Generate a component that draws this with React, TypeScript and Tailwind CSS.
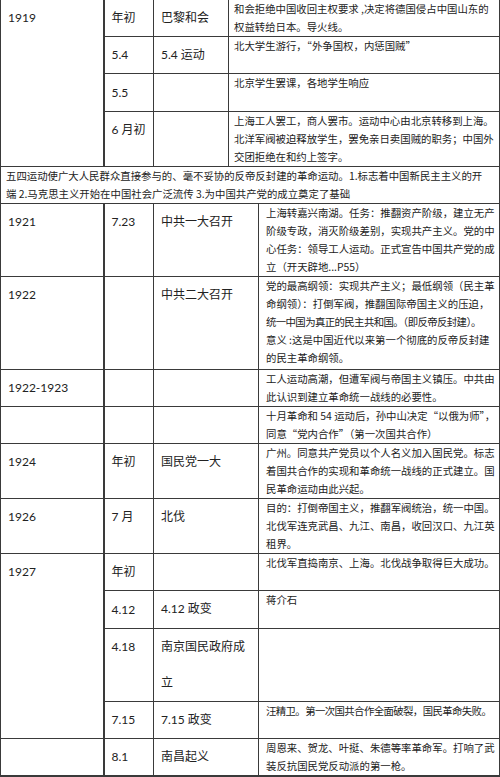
const left = "border border-[#3a3a3a] px-[7px] py-0 align-top text-[12px] leading-[36px] text-[#222] whitespace-nowrap";
const right = "border border-[#3a3a3a] pl-[7px] pr-[3px] py-0 align-top text-[10.4px] leading-[18px] text-[#222] whitespace-nowrap font-['Noto_Sans_CJK_SC',sans-serif]";

function Lines({ lines }: { lines: string[] }) {
  return (
    <>
      {lines.map((l, i) => (
        <div key={i}>{l}</div>
      ))}
    </>
  );
}

function T({ children }: { children?: React.ReactNode }) {
  return <span className="leading-none">{children}</span>;
}

export default function App() {
  return (
    <div className="w-[500px] min-h-[777px] bg-white font-['Noto_Sans_CJK_SC',sans-serif]">
      <table className="w-[499px] table-fixed border-collapse border-b-2 border-b-[#3a3a3a]">
        <colgroup>
          <col className="w-[103px]" />
          <col className="w-[50px]" />
          <col className="w-[75px]" />
          <col className="w-[30px]" />
          <col className="w-[241px]" />
        </colgroup>
        <tbody className="font-['Lato','Noto_Sans_CJK_SC',sans-serif]">
          {/* 1919 */}
          <tr>
            <td rowSpan={4} className={`${left} border-t-0 border-r-2`}><T>1919</T></td>
            <td className={`${left} border-t-0`}><T>年初</T></td>
            <td className={`${left} border-t-0`}><T>巴黎和会</T></td>
            <td colSpan={2} className={`${right} border-t-0 !pl-[5px]`}>
              <Lines lines={["和会拒绝中国收回主权要求 ,决定将德国侵占中国山东的", "权益转给日本。导火线。"]} />
            </td>
          </tr>
          <tr>
            <td className={left}><T>5.4</T></td>
            <td className={left}><T>5.4 运动</T></td>
            <td colSpan={2} className={`${right} !pl-[5px]`}>
              北大学生游行，“外争国权，内惩国贼”
            </td>
          </tr>
          <tr>
            <td className={`${left} leading-[37px]`}><T>5.5</T></td>
            <td className={left}></td>
            <td colSpan={2} className={`${right} !pl-[5px]`}>
              北京学生罢课，各地学生响应
            </td>
          </tr>
          <tr>
            <td className={left}><T>6 月初</T></td>
            <td className={left}></td>
            <td colSpan={2} className={`${right} !pl-[5px]`}>
              <Lines
                lines={[
                  "上海工人罢工，商人罢市。运动中心由北京转移到上海。",
                  "北洋军阀被迫释放学生，罢免亲日卖国贼的职务；中国外",
                  "交团拒绝在和约上签字。",
                ]}
              />
            </td>
          </tr>
          <tr>
            <td colSpan={5} className={`${right} !pl-[5px]`}>
              <Lines
                lines={[
                  "五四运动使广大人民群众直接参与的、毫不妥协的反帝反封建的革命运动。1.标志着中国新民主主义的开",
                  "端 2.马克思主义开始在中国社会广泛流传 3.为中国共产党的成立奠定了基础",
                ]}
              />
            </td>
          </tr>

          {/* 1921 */}
          <tr>
            <td className={`${left} border-r-2`}><T>1921</T></td>
            <td className={left}><T>7.23</T></td>
            <td colSpan={2} className={left}><T>中共一大召开</T></td>
            <td className={right}>
              <Lines
                lines={[
                  "上海转嘉兴南湖。任务：推翻资产阶级，建立无产",
                  "阶级专政，消灭阶级差别，实现共产主义。党的中",
                  "心任务：领导工人运动。正式宣告中国共产党的成",
                  "立（开天辟地...P55）",
                ]}
              />
            </td>
          </tr>
          <tr>
            <td className={`${left} border-r-2`}><T>1922</T></td>
            <td className={left}></td>
            <td colSpan={2} className={left}><T>中共二大召开</T></td>
            <td className={`${right} pb-[2px]`}>
              <div>党的最高纲领：实现共产主义；最低纲领（民主革</div>
              <div>命纲领）：打倒军阀，推翻国际帝国主义的压迫，</div>
              <div className="tracking-[-0.6px]">统一中国为真正的民主共和国。（即反帝反封建）。</div>
              <div>意义 :这是中国近代以来第一个彻底的反帝反封建</div>
              <div>的民主革命纲领。</div>
            </td>
          </tr>
          <tr>
            <td className={`${left} border-r-2`}><T>1922-1923</T></td>
            <td className={left}></td>
            <td colSpan={2} className={left}></td>
            <td className={right}>
              <Lines lines={["工人运动高潮，但遭军阀与帝国主义镇压。中共由", "此认识到建立革命统一战线的必要性。"]} />
            </td>
          </tr>
          <tr>
            <td className={`${left} border-r-2`}></td>
            <td className={left}></td>
            <td colSpan={2} className={left}></td>
            <td className={right}>
              <Lines lines={["十月革命和 54 运动后，孙中山决定“以俄为师”，", "同意“党内合作”（第一次国共合作）"]} />
            </td>
          </tr>
          <tr>
            <td className={`${left} border-r-2`}><T>1924</T></td>
            <td className={left}><T>年初</T></td>
            <td colSpan={2} className={left}><T>国民党一大</T></td>
            <td className={right}>
              <Lines
                lines={[
                  "广州。同意共产党员以个人名义加入国民党。标志",
                  "着国共合作的实现和革命统一战线的正式建立。国",
                  "民革命运动由此兴起。",
                ]}
              />
            </td>
          </tr>
          <tr>
            <td className={`${left} border-r-2`}><T>1926</T></td>
            <td className={left}><T>7 月</T></td>
            <td colSpan={2} className={left}><T>北伐</T></td>
            <td className={right}>
              <Lines
                lines={[
                  "目的：打倒帝国主义，推翻军阀统治，统一中国。",
                  "北伐军连克武昌、九江、南昌，收回汉口、九江英",
                  "租界。",
                ]}
              />
            </td>
          </tr>

          {/* 1927 */}
          <tr>
            <td rowSpan={4} className={`${left} border-r-2`}><T>1927</T></td>
            <td className={left}><T>年初</T></td>
            <td colSpan={2} className={left}></td>
            <td className={right}>北伐军直捣南京、上海。北伐战争取得巨大成功。</td>
          </tr>
          <tr>
            <td className={`${left} leading-[37px]`}><T>4.12</T></td>
            <td colSpan={2} className={left}><T>4.12 政变</T></td>
            <td className={right}>蒋介石</td>
          </tr>
          <tr>
            <td className={left}><T>4.18</T></td>
            <td colSpan={2} className={left}>
              <div><T>南京国民政府成</T></div>
              <div><T>立</T></div>
            </td>
            <td className={right}></td>
          </tr>
          <tr>
            <td className={left}><T>7.15</T></td>
            <td colSpan={2} className={left}><T>7.15 政变</T></td>
            <td className={`${right} tracking-[-0.6px]`}>汪精卫。第一次国共合作全面破裂，国民革命失败。</td>
          </tr>
          <tr>
            <td className={`${left} border-r-2`}></td>
            <td className={left}><T>8.1</T></td>
            <td colSpan={2} className={left}><T>南昌起义</T></td>
            <td className={right}>
              <Lines lines={["周恩来、贺龙、叶挺、朱德等率革命军。打响了武", "装反抗国民党反动派的第一枪。"]} />
            </td>
          </tr>
        </tbody>
      </table>
    </div>
  );
}
